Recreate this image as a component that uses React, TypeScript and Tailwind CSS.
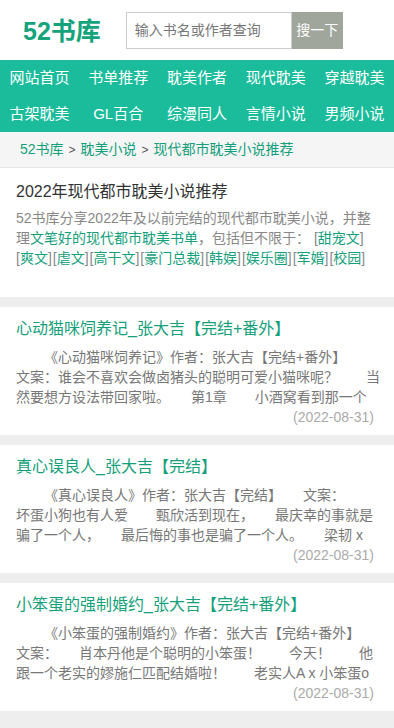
import React from "react";

const S = "\u3000\u3000";

type Book = {
    title: string;
    lines: Array<string>;
    date: string;
}

const navItems = [
    "网站首页", "书单推荐", "耽美作者", "现代耽美", "穿越耽美",
    "古架耽美", "GL百合", "综漫同人", "言情小说", "男频小说",
];

const tags = ["爽文", "虐文", "高干文", "豪门总裁", "韩娱", "娱乐圈", "军婚", "校园"];

const books: Array<Book> = [
    {
        title: "心动猫咪饲养记_张大吉【完结+番外】",
        lines: [
            "《心动猫咪饲养记》作者：张大吉【完结+番外】",
            "文案：谁会不喜欢会做卤猪头的聪明可爱小猫咪呢？" + S + "当",
            "然要想方设法带回家啦。" + S + "第1章" + S + "小酒窝看到那一个",
        ],
        date: "(2022-08-31)",
    },
    {
        title: "真心误良人_张大吉【完结】",
        lines: [
            "《真心误良人》作者：张大吉【完结】" + S + "文案：",
            "坏蛋小狗也有人爱" + S + "甄欣活到现在，" + S + "最庆幸的事就是",
            "骗了一个人，" + S + "最后悔的事也是骗了一个人。" + S + "梁韧 x",
        ],
        date: "(2022-08-31)",
    },
    {
        title: "小笨蛋的强制婚约_张大吉【完结+番外】",
        lines: [
            "《小笨蛋的强制婚约》作者：张大吉【完结+番外】",
            "文案：" + S + "肖本丹他是个聪明的小笨蛋！" + S + "今天！" + S + "他",
            "跟一个老实的嫪施仁匹配结婚啦！" + S + "老实人A x 小笨蛋o",
        ],
        date: "(2022-08-31)",
    },
];

function BookCard({book}: {book: Book}) {
    return (
        <div className="bg-white px-4 pt-[10px] pb-[8px]">
            <a href="#" className="block text-[16px] leading-[24px] text-[#14a07b] whitespace-nowrap">{book.title}</a>
            <div className="mt-[6px] text-[14px] leading-[20px] text-[#777]">
                {book.lines.map((line, i) => (
                    <div key={i} className={i === 0 ? "pl-[28px] whitespace-nowrap" : "whitespace-nowrap"}>{line}</div>
                ))}
            </div>
            <div className="text-right pr-[4px] text-[14px] leading-[20px] text-[#aaa]">{book.date}</div>
        </div>
    );
}

export default function App() {
    return (
        <div className="w-[394px] min-h-[728px] bg-[#eeeeee] font-['Liberation_Sans','Noto_Sans_CJK_SC',sans-serif]">
            {/* header */}
            <div className="h-[60px] bg-white flex items-center pl-[23px]">
                <a href="#" className="text-[25px] font-bold text-[#15a37c] leading-none mt-[2px]">52书库</a>
                <div className="flex ml-[25px] h-[37px]">
                    <div className="w-[166px] border border-[#ccc] flex items-center pl-[8px] text-[14px] text-[#777]">
                        输入书名或作者查询
                    </div>
                    <button className="w-[51px] bg-[#a1a69d] text-white text-[14px]">搜一下</button>
                </div>
            </div>

            {/* nav */}
            <div className="bg-[#1abc9c] grid grid-cols-5">
                {navItems.map((item) => (
                    <a key={item} href="#" className="h-[36px] flex items-center justify-center text-white text-[15px]">{item}</a>
                ))}
            </div>

            {/* breadcrumb */}
            <div className="h-[36px] bg-[#f5f5f5] border-b border-[#e6e6e6] flex items-center pl-[20px] text-[14px] text-[#14a07b]">
                <a href="#">52书库</a>
                <span className="text-[#555] text-[12px] mx-[5px]">&gt;</span>
                <a href="#">耽美小说</a>
                <span className="text-[#555] text-[12px] mx-[5px]">&gt;</span>
                <a href="#">现代都市耽美小说推荐</a>
            </div>

            {/* intro */}
            <div className="bg-white px-4 pt-[12px] pb-[29px]">
                <h1 className="text-[16px] leading-[24px] text-[#333] font-normal">2022年现代都市耽美小说推荐</h1>
                <p className="mt-[4px] text-[14px] leading-[20px] text-[#888]">
                    <span className="whitespace-nowrap">52书库分享2022年及以前完结的现代都市耽美小说，并整</span>
                    <br/>
                    <span className="whitespace-nowrap">
                        理<a href="#" className="text-[#14a07b]">文笔好的现代都市耽美书单</a>，包括但不限于： [<a href="#" className="text-[#14a07b]">甜宠文</a>]
                    </span>
                    <br/>
                    <span className="whitespace-nowrap">
                        {tags.map((t) => (
                            <span key={t} className="mr-[1px]">[<a href="#" className="text-[#14a07b]">{t}</a>]</span>
                        ))}
                    </span>
                </p>
            </div>

            {/* list */}
            <div className="flex flex-col gap-[10px] pt-[10px] pb-[10px]">
                {books.map((b) => (
                    <BookCard key={b.title} book={b}/>
                ))}
            </div>
        </div>
    );
}
